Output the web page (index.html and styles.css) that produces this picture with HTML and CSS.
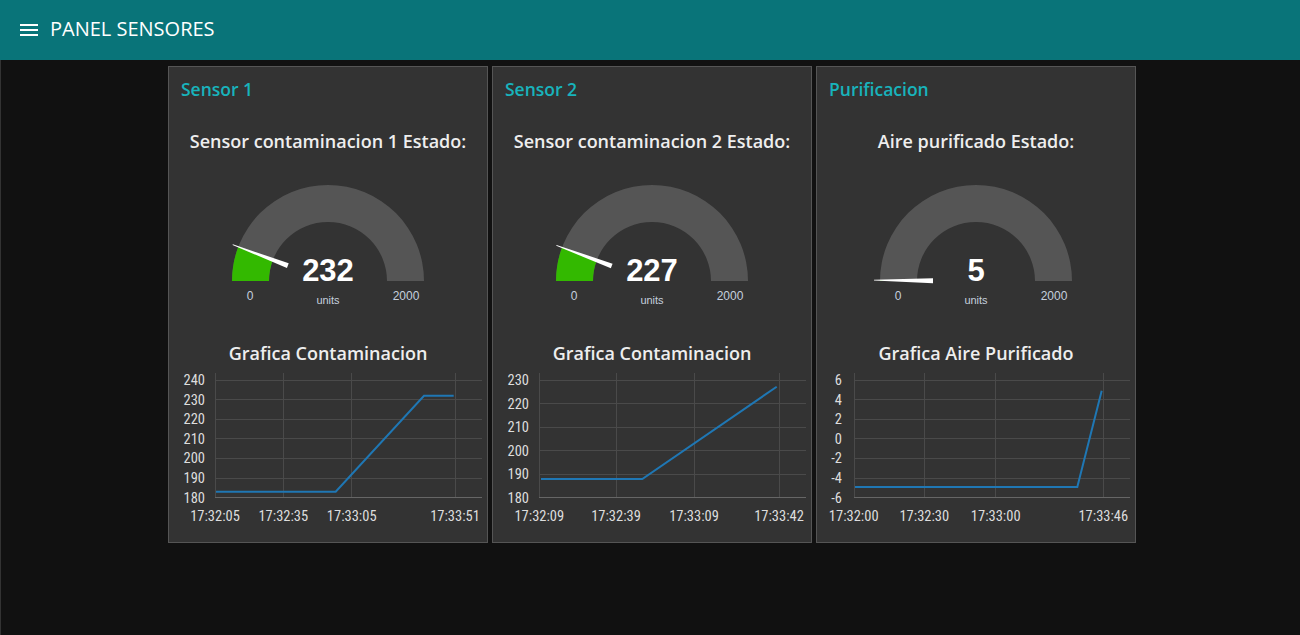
FILE: index.html
```html
<!DOCTYPE html>
<html lang="es">
<head>
<meta charset="utf-8">
<title>PANEL SENSORES</title>
<link rel="stylesheet" href="styles.css">
</head>
<body>
<header class="toolbar">
  <svg class="menu-icon" width="18" height="13" viewBox="0 0 18 13" aria-hidden="true">
    <rect x="0" y="0" width="18" height="2" fill="#fff"/>
    <rect x="0" y="5" width="18" height="2" fill="#fff"/>
    <rect x="0" y="10" width="18" height="2" fill="#fff"/>
  </svg>
  <span class="toolbar-title">PANEL SENSORES</span>
</header>
<main class="content">
  <section class="card">
    <h2 class="card-title">Sensor 1</h2>
    <div class="widget-label">Sensor contaminacion 1 Estado:</div>
    <svg class="gauge" width="318" height="150" viewBox="0 0 318 150">
      <path class="g-back" d="M63 110 A96 96 0 0 1 255 110 L218 110 A59 59 0 0 0 100 110 Z"/>
      <path class="g-fill" d="M63 110 A96 96 0 0 1 69.3 75.8 L103.9 89 A59 59 0 0 0 100 110 Z"/>
      <polygon class="g-needle" points="57,109.6 116,107.5 116,112.5 57,110.4" transform="rotate(20.88 159 110)"/>
      <text class="g-value" x="159" y="110">232</text>
      <text class="g-units" x="159" y="133">units</text>
      <text class="g-minmax" x="81" y="129">0</text>
      <text class="g-minmax" x="237" y="129">2000</text>
    </svg>
    <div class="chart-label">Grafica Contaminacion</div>
    <svg class="chart" width="318" height="177" viewBox="0 0 318 177">
      <g class="grid">
        <line x1="46" x2="313" y1="15.5" y2="15.5"/>
        <line x1="46" x2="313" y1="34.5" y2="34.5"/>
        <line x1="46" x2="313" y1="54.5" y2="54.5"/>
        <line x1="46" x2="313" y1="73.5" y2="73.5"/>
        <line x1="46" x2="313" y1="93.5" y2="93.5"/>
        <line x1="46" x2="313" y1="113.5" y2="113.5"/>
        <line x1="46.5" x2="46.5" y1="8" y2="133"/>
        <line x1="114.5" x2="114.5" y1="8" y2="133"/>
        <line x1="182.5" x2="182.5" y1="8" y2="133"/>
        <line x1="286.5" x2="286.5" y1="8" y2="133"/>
      </g>
      <line class="axis" x1="46" x2="313" y1="132.5" y2="132.5"/>
      <g class="ylab">
        <text x="36" y="20">240</text>
        <text x="36" y="39.6">230</text>
        <text x="36" y="59.2">220</text>
        <text x="36" y="78.8">210</text>
        <text x="36" y="98.4">200</text>
        <text x="36" y="118">190</text>
        <text x="36" y="137.6">180</text>
      </g>
      <g class="xlab">
        <text x="46" y="156">17:32:05</text>
        <text x="114.3" y="156">17:32:35</text>
        <text x="182.7" y="156">17:33:05</text>
        <text x="286" y="156">17:33:51</text>
      </g>
      <polyline class="series" points="47,126.7 166.7,126.7 255,30.7 284.7,30.7"/>
    </svg>
  </section>

  <section class="card">
    <h2 class="card-title">Sensor 2</h2>
    <div class="widget-label">Sensor contaminacion 2 Estado:</div>
    <svg class="gauge" width="318" height="150" viewBox="0 0 318 150">
      <path class="g-back" d="M63 110 A96 96 0 0 1 255 110 L218 110 A59 59 0 0 0 100 110 Z"/>
      <path class="g-fill" d="M63 110 A96 96 0 0 1 69 76.5 L103.7 89.4 A59 59 0 0 0 100 110 Z"/>
      <polygon class="g-needle" points="57,109.6 116,107.5 116,112.5 57,110.4" transform="rotate(20.43 159 110)"/>
      <text class="g-value" x="159" y="110">227</text>
      <text class="g-units" x="159" y="133">units</text>
      <text class="g-minmax" x="81" y="129">0</text>
      <text class="g-minmax" x="237" y="129">2000</text>
    </svg>
    <div class="chart-label">Grafica Contaminacion</div>
    <svg class="chart" width="318" height="177" viewBox="0 0 318 177">
      <g class="grid">
        <line x1="46" x2="313" y1="15.5" y2="15.5"/>
        <line x1="46" x2="313" y1="38.5" y2="38.5"/>
        <line x1="46" x2="313" y1="62.5" y2="62.5"/>
        <line x1="46" x2="313" y1="85.5" y2="85.5"/>
        <line x1="46" x2="313" y1="109.5" y2="109.5"/>
        <line x1="46.5" x2="46.5" y1="8" y2="133"/>
        <line x1="123.5" x2="123.5" y1="8" y2="133"/>
        <line x1="201.5" x2="201.5" y1="8" y2="133"/>
        <line x1="286.5" x2="286.5" y1="8" y2="133"/>
      </g>
      <line class="axis" x1="46" x2="313" y1="132.5" y2="132.5"/>
      <g class="ylab">
        <text x="36" y="20">230</text>
        <text x="36" y="43.5">220</text>
        <text x="36" y="67">210</text>
        <text x="36" y="90.5">200</text>
        <text x="36" y="114">190</text>
        <text x="36" y="137.6">180</text>
      </g>
      <g class="xlab">
        <text x="46.3" y="156">17:32:09</text>
        <text x="123" y="156">17:32:39</text>
        <text x="201" y="156">17:33:09</text>
        <text x="286" y="156">17:33:42</text>
      </g>
      <polyline class="series" points="48,114 149.3,114 283.7,21.7"/>
    </svg>
  </section>

  <section class="card">
    <h2 class="card-title">Purificacion</h2>
    <div class="widget-label">Aire purificado Estado:</div>
    <svg class="gauge" width="318" height="150" viewBox="0 0 318 150">
      <path class="g-back" d="M63 110 A96 96 0 0 1 255 110 L218 110 A59 59 0 0 0 100 110 Z"/>
      <path class="g-fill" d="M63 110 A96 96 0 0 1 63 109.2 L100 109.5 A59 59 0 0 0 100 110 Z"/>
      <polygon class="g-needle" points="57,109.6 116,107.5 116,112.5 57,110.4" transform="rotate(0.45 159 110)"/>
      <text class="g-value" x="159" y="110">5</text>
      <text class="g-units" x="159" y="133">units</text>
      <text class="g-minmax" x="81" y="129">0</text>
      <text class="g-minmax" x="237" y="129">2000</text>
    </svg>
    <div class="chart-label">Grafica Aire Purificado</div>
    <svg class="chart" width="318" height="177" viewBox="0 0 318 177">
      <g class="grid">
        <line x1="37" x2="313" y1="15.5" y2="15.5"/>
        <line x1="37" x2="313" y1="34.5" y2="34.5"/>
        <line x1="37" x2="313" y1="54.5" y2="54.5"/>
        <line x1="37" x2="313" y1="73.5" y2="73.5"/>
        <line x1="37" x2="313" y1="93.5" y2="93.5"/>
        <line x1="37" x2="313" y1="113.5" y2="113.5"/>
        <line x1="37.5" x2="37.5" y1="8" y2="133"/>
        <line x1="107.5" x2="107.5" y1="8" y2="133"/>
        <line x1="178.5" x2="178.5" y1="8" y2="133"/>
        <line x1="286.5" x2="286.5" y1="8" y2="133"/>
      </g>
      <line class="axis" x1="37" x2="313" y1="132.5" y2="132.5"/>
      <g class="ylab">
        <text x="25" y="20">6</text>
        <text x="25" y="39.6">4</text>
        <text x="25" y="59.2">2</text>
        <text x="25" y="78.8">0</text>
        <text x="25" y="98.4">-2</text>
        <text x="25" y="118">-4</text>
        <text x="25" y="137.6">-6</text>
      </g>
      <g class="xlab">
        <text x="36.7" y="156">17:32:00</text>
        <text x="107.3" y="156">17:32:30</text>
        <text x="178.7" y="156">17:33:00</text>
        <text x="286.3" y="156">17:33:46</text>
      </g>
      <polyline class="series" points="38,122 260.3,122 284.7,25.7"/>
    </svg>
  </section>
</main>
</body>
</html>
```

FILE: styles.css
```css
* {
  box-sizing: border-box;
}

html, body {
  margin: 0;
  padding: 0;
  background: #111111;
  font-family: "Open Sans", "Noto Sans", sans-serif;
  color: #eeeeee;
}

.toolbar {
  height: 60px;
  background: #097479;
  display: flex;
  align-items: center;
  padding-left: 20px;
}

.menu-icon {
  display: block;
  margin-top: 1px;
}

.toolbar-title {
  margin-left: 12px;
  margin-bottom: 4px;
  font-size: 20px;
  color: #ffffff;
  letter-spacing: 0;
}

.content {
  display: flex;
  gap: 4px;
  padding: 6px 0 0 167px;
  border-left: 1px solid #333333;
  min-height: 575px;
}

.card {
  width: 320px;
  height: 477px;
  background: #333333;
  border: 1px solid #555555;
  display: flex;
  flex-direction: column;
}

.card-title {
  margin: 0;
  height: 44px;
  line-height: 44px;
  padding-left: 12px;
  font-size: 17.5px;
  font-weight: 600;
  color: #18b3bc;
}

.widget-label {
  height: 60px;
  line-height: 60px;
  text-align: center;
  font-size: 18px;
  font-weight: 600;
  color: #eeeeee;
}

.gauge,
.chart {
  display: block;
}

.g-back {
  fill: #555555;
}

.g-fill {
  fill: #33b900;
}

.g-needle {
  fill: #ffffff;
}

.g-value {
  font-family: "Liberation Sans", Arial, sans-serif;
  font-weight: bold;
  font-size: 31px;
  fill: #ffffff;
  text-anchor: middle;
}

.g-units {
  font-family: "Liberation Sans", Arial, sans-serif;
  font-size: 11px;
  fill: #c5d0de;
  text-anchor: middle;
}

.g-minmax {
  font-family: "Liberation Sans", Arial, sans-serif;
  font-size: 12px;
  fill: #c5d0de;
  text-anchor: middle;
}

.chart-label {
  margin-top: 20px;
  height: 24px;
  line-height: 24px;
  text-align: center;
  font-size: 18px;
  font-weight: 600;
  color: #eeeeee;
}

.grid line {
  stroke: #4a4a4a;
  stroke-width: 1;
}

.axis {
  stroke: #666666;
  stroke-width: 1;
}

.ylab text,
.xlab text {
  font-family: "Liberation Sans Narrow", "Roboto Condensed", Roboto, sans-serif;
  font-size: 14.5px;
  fill: #dddddd;
}

.ylab text {
  text-anchor: end;
}

.xlab text {
  text-anchor: middle;
}

.series {
  fill: none;
  stroke: #1f77b4;
  stroke-width: 2;
  stroke-linejoin: miter;
}
```
